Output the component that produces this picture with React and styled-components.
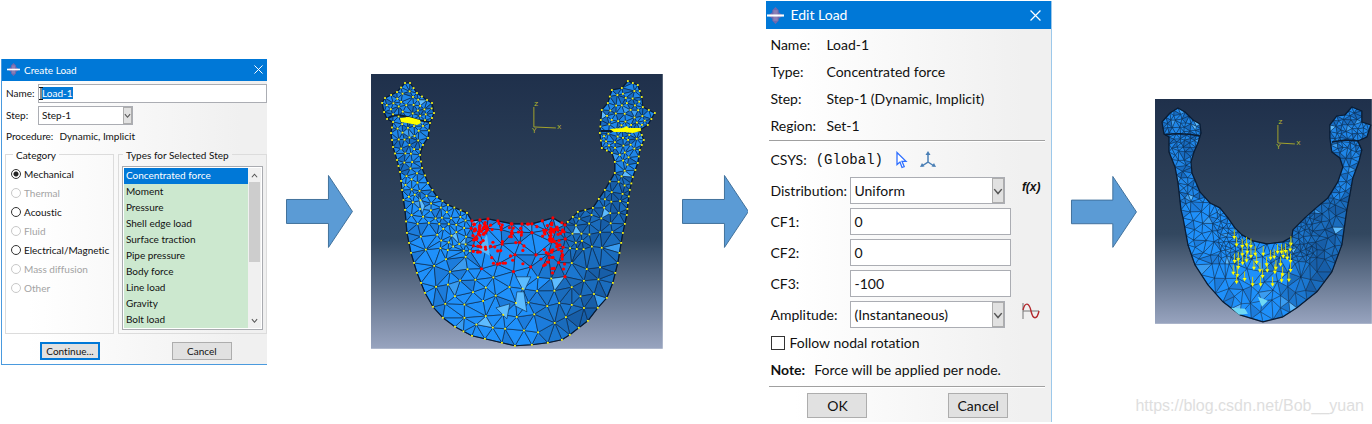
import React, { useEffect, useRef } from "react";
import styled, { createGlobalStyle, css } from "styled-components";

const GlobalStyle = createGlobalStyle`
  *, *::before, *::after { box-sizing: border-box; }
  body {
    margin: 0;
    background: #fff;
    color: #111;
    font-family: Lato, "Open Sans", sans-serif;
    font-variant-ligatures: none;
  }
  button, input, select { font: inherit; font-variant-ligatures: none; color: inherit; margin: 0; }
`;

const Page = styled.main`
  position: relative;
  padding: 1px 0 2px 1px;
`;

const Flow = styled.div`
  display: grid;
  grid-template-columns:
    minmax(0, 266fr) minmax(0, 68fr) minmax(0, 292fr) minmax(0, 68fr)
    minmax(0, 286fr) minmax(0, 67fr) minmax(0, 217fr);
  column-gap: 18px;
  align-items: center;
`;

const Drawing = styled.svg`
  display: block;
  width: 100%;
  height: auto;
`;

const Watermark = styled.a`
  position: absolute;
  right: 8px;
  bottom: 8px;
  font: 16px/20px "Liberation Sans", sans-serif;
  color: #dedede;
  text-decoration: none;
`;

/* ---------- dialog parts ---------- */

const Dialog = styled.section`
  background: linear-gradient(90deg, #fff 10%, #f0f0f0 90%);
  border: 0 solid #4a9ade;
  ${(p) =>
    p.$small
      ? css`
          font-size: 10px;
          line-height: 16px;
          border-width: 0 0 1px 1px;
        `
      : css`
          font-size: 14px;
          line-height: 20px;
          border-right: 1px solid #9cc8ea;
        `}
`;

const TitleBar = styled.header`
  display: flex;
  align-items: center;
  gap: ${(p) => (p.$small ? 4 : 6)}px;
  height: ${(p) => (p.$small ? 22 : 28)}px;
  padding: ${(p) => (p.$small ? "0 4px 0 5px" : "0 10px 0 1px")};
  background: #0078d7;
  color: #fff;
`;

const Title = styled.h2`
  flex: 1;
  margin: 0;
  font: inherit;
`;

const CloseButton = styled.button`
  display: flex;
  padding: 0;
  border: 0;
  background: none;
`;

const PushButton = styled.button`
  width: 60px;
  height: ${(p) => (p.$small ? 18 : 25)}px;
  padding: 0;
  border: ${(p) => (p.$primary ? "2px solid #0078d7" : "1px solid #adadad")};
  background: #e1e1e1;
  line-height: 14px;
`;

const ButtonRow = styled.footer`
  display: flex;
  justify-content: space-between;
  padding: ${(p) => (p.$small ? "8px 35px 4px 38px" : "5px 43px 4px 41px")};
`;

const TextInput = styled.input`
  width: 100%;
  height: ${(p) => (p.$small ? 19 : 27)}px;
  padding: 0 3px;
  border: 1px solid #abadb3;
  border-radius: 0;
  background: #fff;
  outline: none;
  &::selection { background: rgba(0, 120, 215, 0.99); color: #fff; }
`;

const SelectBox = styled.div`
  position: relative;
  width: ${(p) => (p.$small ? "95px" : "auto")};
  margin-right: ${(p) => (p.$small ? 0 : 6)}px;
  select {
    display: block;
    appearance: none;
    width: 100%;
    height: ${(p) => (p.$small ? 19 : 27)}px;
    padding: 0 3px;
    border: 1px solid #abadb3;
    border-radius: 0;
    background: #fff;
  }
`;

const DropMark = styled.span`
  position: absolute;
  top: 1px;
  right: 1px;
  bottom: 1px;
  width: ${(p) => (p.$small ? 9 : 12)}px;
  display: flex;
  align-items: center;
  justify-content: center;
  border: 1px solid #adadad;
  background: #e1e1e1;
  pointer-events: none;
`;

/* ---------- create-load parts ---------- */

const CreateForm = styled.div`
  display: grid;
  grid-template-columns: 32px 1fr;
  align-items: center;
  row-gap: 3px;
  padding: 3px 0 0 4px;
`;

const NameField = styled.div`
  position: relative;
`;

const TextCursor = styled.svg`
  position: absolute;
  left: 1px;
  top: 3px;
  pointer-events: none;
`;

const Procedure = styled.p`
  display: flex;
  gap: 6px;
  margin: 0;
  padding: 3px 4px;
`;

const Groups = styled.div`
  display: grid;
  grid-template-columns: 109fr 149fr;
  gap: 4px;
  padding-left: 3px;
`;

const Group = styled.fieldset`
  min-width: 0;
  margin: 0;
  padding: ${(p) => (p.$list ? "3px" : "2px 4px 0 5px")};
  border: 1px solid #dcdcdc;
  legend { margin-left: ${(p) => (p.$list ? 1 : 2)}px; padding: 0 3px; }
`;

const RadioLabel = styled.label`
  display: flex;
  align-items: center;
  gap: 3px;
  height: 19px;
  white-space: nowrap;
  color: ${(p) => (p.$off ? "#a3a3a3" : "#111")};
  input {
    appearance: none;
    flex: none;
    width: 10px;
    height: 10px;
    border: 1px solid ${(p) => (p.$off ? "#c8c8c8" : "#333")};
    border-radius: 50%;
    background: #fff;
  }
  input:checked { background: radial-gradient(#222 0 2px, #fff 3px); }
`;

const ListFrame = styled.div`
  display: flex;
  height: 164px;
  padding: 1px;
  border: 1px solid #a9abb0;
  background: #fff;
`;

const ListBox = styled.select`
  flex: 1;
  min-width: 0;
  height: 160px;
  padding: 0;
  border: 0;
  border-radius: 0;
  outline: none;
  overflow: hidden;
  background: #cce8cf;
  scrollbar-width: none;
  option { height: 16px; min-height: 16px; padding: 1px 2px 0; line-height: 15px; }
  option:checked {
    background: linear-gradient(#0078d7, #0078d7);
    -webkit-text-fill-color: #fff;
  }
`;

const ScrollTrack = styled.div`
  display: flex;
  flex-direction: column;
  align-items: center;
  justify-content: space-between;
  width: 13px;
  padding: 4px 0;
  background: #f0f0f0;
`;

const ScrollThumb = styled.div`
  width: 11px;
  height: 80px;
  margin: 3px 0 auto;
  background: #cdcdcd;
`;

/* ---------- edit-load parts ---------- */

const InfoList = styled.dl`
  display: grid;
  grid-template-columns: 56px 1fr;
  grid-auto-rows: 27px;
  align-items: center;
  margin: 0;
  padding: 2px 0 1px 4px;
  dd { margin: 0; }
`;

const Separator = styled.hr`
  height: 2px;
  margin: 0 6px 0 3px;
  border: 0;
  border-top: 1px solid #a0a0a0;
  background: #fff;
`;

const CsysRow = styled.div`
  display: flex;
  align-items: center;
  gap: 9px;
  height: 35px;
  padding-left: 4px;
`;

const Mono = styled.span`
  font: 14px/20px "Liberation Mono", monospace;
`;

const IconButton = styled.button`
  display: flex;
  align-items: center;
  justify-content: center;
  height: 20px;
  padding: 0;
  border: 0;
  background: none;
  font: italic bold 12px/20px "Liberation Sans Narrow", "Liberation Sans", sans-serif;
`;

const FieldTool = styled(IconButton)`
  align-self: start;
`;

const LoadForm = styled.div`
  display: grid;
  grid-template-columns: 80px 1fr 40px;
  row-gap: 4px;
  align-items: center;
  padding-left: 4px;
  label { white-space: nowrap; }
`;

const CheckLabel = styled.label`
  display: flex;
  align-items: center;
  gap: 4px;
  height: 30px;
  padding-left: 5px;
  input {
    appearance: none;
    width: 14px;
    height: 14px;
    border: 1px solid #333;
    background: #fff;
  }
`;

const Note = styled.p`
  display: flex;
  gap: 9px;
  align-items: center;
  height: 28px;
  margin: 0;
  padding: 0 0 4px 4px;
`;

/* ---------- small drawings ---------- */

const AppIcon = ({ size }) => (
  <svg width={size} height={size} viewBox="0 0 16 16" aria-hidden="true">
    <path d="M8 0 L11 3 V5 L15 8 L11 11 V13 L8 16 L5 13 V11 L1 8 L5 5 V3 Z" fill="#6f68ae" />
    <path d="M6 3 H10 V13 H6 Z" fill="#8a7fb4" />
    <path d="M0 7 H16 V9 H0 Z" fill="#fff" />
  </svg>
);

const CrossIcon = ({ size }) => (
  <svg width={size} height={size} viewBox="0 0 10 10" aria-hidden="true">
    <path d="M.5 .5 L9.5 9.5 M9.5 .5 L.5 9.5" stroke="#fff" strokeWidth="1.1" />
  </svg>
);

const Chevron = ({ up, size = 7, color = "#555" }) => (
  <svg width={size} height={size} viewBox="0 0 8 8" aria-hidden="true">
    <path d={up ? "M1 6 L4 2.5 L7 6" : "M1 2.5 L4 6 L7 2.5"} fill="none" stroke={color} strokeWidth="1.2" />
  </svg>
);

const BlockArrow = () => (
  <Drawing viewBox="0 0 68 75" aria-hidden="true">
    <path d="M1.5 25.5 H43.5 V1.5 L67.5 37.5 L43.5 73.5 V49.5 H1.5 Z" fill="#5b9bd5" stroke="#41719c" />
  </Drawing>
);

/* ---------- finite element mesh ---------- */

const makeRandom = (seed) => () => {
  seed = (seed * 1664525 + 1013904223) >>> 0;
  return seed / 4294967296;
};

const isInside = (poly, x, y) => {
  let hit = false;
  for (let i = 0, j = poly.length - 1; i < poly.length; j = i++) {
    const [ax, ay] = poly[i];
    const [bx, by] = poly[j];
    if (ay > y !== by > y && x < ((bx - ax) * (y - ay)) / (by - ay) + ax) hit = !hit;
  }
  return hit;
};

const circle = (pts, a, b, c) => {
  const [ax, ay] = pts[a];
  const bx = pts[b][0] - ax;
  const by = pts[b][1] - ay;
  const cx = pts[c][0] - ax;
  const cy = pts[c][1] - ay;
  const d = 2 * (bx * cy - by * cx) || 1e-9;
  const ux = (cy * (bx * bx + by * by) - by * (cx * cx + cy * cy)) / d;
  const uy = (bx * (cx * cx + cy * cy) - cx * (bx * bx + by * by)) / d;
  return { v: [a, b, c], x: ax + ux, y: ay + uy, r: ux * ux + uy * uy };
};

const triangulate = (nodes) => {
  const n = nodes.length;
  const pts = [...nodes, [-2000, -1000], [2500, -1000], [150, 3000]];
  let tris = [circle(pts, n, n + 1, n + 2)];
  for (let i = 0; i < n; i++) {
    const [x, y] = pts[i];
    const edges = new Map();
    tris = tris.filter((t) => {
      if ((t.x - x) ** 2 + (t.y - y) ** 2 >= t.r) return true;
      const [a, b, c] = t.v;
      [[a, b], [b, c], [c, a]].forEach(([p, q]) => {
        const key = p < q ? p * 10000 + q : q * 10000 + p;
        if (edges.has(key)) edges.delete(key);
        else edges.set(key, [p, q]);
      });
      return false;
    });
    edges.forEach(([p, q]) => tris.push(circle(pts, p, q, i)));
  }
  return tris.map((t) => t.v).filter((v) => v.every((k) => k < n));
};

const buildMesh = (outline, spacing, shade, seed) => {
  const rnd = makeRandom(seed);
  const nodes = [];
  outline.forEach(([x, y], i) => {
    const [nx, ny] = outline[(i + 1) % outline.length];
    const len = Math.hypot(nx - x, ny - y);
    const steps = Math.max(1, Math.round(len / Math.min(12, spacing(x, y) + 2)));
    for (let s = 0; s < steps; s++) {
      nodes.push([x + ((nx - x) * s) / steps + rnd() * 0.1, y + ((ny - y) * s) / steps + rnd() * 0.1]);
    }
  });
  const xs = outline.map((p) => p[0]);
  const ys = outline.map((p) => p[1]);
  const x0 = Math.min(...xs);
  const y0 = Math.min(...ys);
  const w = Math.max(...xs) - x0;
  const h = Math.max(...ys) - y0;
  for (let i = 0; i < 16000; i++) {
    const x = x0 + rnd() * w;
    const y = y0 + rnd() * h;
    if (!isInside(outline, x, y)) continue;
    const r = spacing(x, y);
    if (nodes.every((p) => (p[0] - x) ** 2 + (p[1] - y) ** 2 > r * r)) nodes.push([x, y]);
  }
  const faces = triangulate(nodes)
    .map((v) => v.map((k) => nodes[k]))
    .map((t) => ({ t, x: (t[0][0] + t[1][0] + t[2][0]) / 3, y: (t[0][1] + t[1][1] + t[2][1]) / 3 }))
    .filter((f) => isInside(outline, f.x, f.y))
    .map((f) => ({
      d: f.t.map((p) => p[0].toFixed(1) + "," + p[1].toFixed(1)).join(" "),
      fill: shade(f.x, f.y, rnd()),
    }));
  return { nodes, faces };
};

const FULL_JAW = [
  [34, 9], [39, 9], [46, 19], [56, 26], [61, 29], [63, 39], [59, 49], [57, 64], [52, 71], [49, 81],
  [51, 94], [57, 109], [66, 123], [77, 131], [96, 139], [101, 147], [117, 145], [127, 147], [141, 150],
  [161, 150], [182, 144], [194, 151], [197, 148], [207, 138], [222, 134], [234, 116], [244, 99],
  [244, 88], [241, 79], [231, 74], [229, 59], [230, 46], [231, 36], [237, 29], [241, 16], [251, 14],
  [257, 7], [267, 11], [271, 23], [272, 33], [284, 39], [277, 51], [269, 56], [273, 66], [269, 76],
  [267, 89], [262, 103], [259, 116], [257, 129], [256, 141], [252, 159], [247, 189], [242, 209],
  [236, 224], [227, 234], [217, 247], [199, 261], [191, 266], [177, 269], [161, 271], [144, 272],
  [131, 269], [114, 265], [101, 262], [84, 253], [72, 244], [62, 233], [54, 219], [46, 199],
  [40, 179], [36, 159], [34, 136], [31, 116], [29, 98], [26, 86], [22, 73], [20, 59], [22, 48],
  [16, 45], [13, 38], [11, 29], [14, 24], [26, 18],
];

const LOADED_JAW = [
  [23, 9], [30, 13], [38, 21], [45, 25], [46, 34], [43, 44], [39, 53], [36, 63], [37, 74], [45, 93],
  [55, 104], [65, 109], [73, 119], [80, 129], [87, 136], [98, 142], [112, 145], [128, 143], [137, 138],
  [138, 131], [150, 119], [160, 110], [173, 99], [183, 83], [188, 68], [185, 59], [177, 53], [175, 39],
  [175, 26], [182, 17], [190, 16], [197, 8], [207, 12], [207, 23], [216, 26], [212, 38], [203, 42],
  [207, 51], [204, 63], [198, 79], [195, 96], [192, 111], [187, 146], [177, 173], [162, 193],
  [142, 209], [128, 218], [108, 223], [85, 216], [68, 203], [53, 186], [40, 166], [33, 146],
  [28, 119], [26, 111], [23, 84], [20, 68], [14, 53], [14, 38], [9, 35], [7, 23], [15, 14],
];

const jawShade = (middle) => (x, y, r) => {
  if (r > 0.985) return "#5ebcff";
  if (r > 0.95) return "#3a9cf0";
  const depth = (x - middle) / 40 + (r - 0.5) * 0.8;
  if (y < 100) return r < 0.3 ? "#176bc0" : "#1f86e8";
  if (depth > 0.4) return r < 0.4 ? "#175ea8" : "#1a6cbd";
  if (depth > 0) return "#1b77d0";
  return r < 0.2 ? "#1c7cdc" : "#1f90fa";
};

const fullSpacing = (x, y) => {
  if (y < 80) return 5;
  if (y < 130) return 6;
  if (y < 178 && ((x > 68 && x < 104) || (x > 192 && x < 222))) return 6;
  if (y < 160) return 8;
  return 12;
};

const loadedSpacing = (x, y) => {
  if (y < 50) return 4;
  if (y < 105) return 5;
  if (y < 165 && ((x > 62 && x < 92) || (x > 134 && x < 160))) return 4;
  if (y < 160) return 7;
  return 9;
};

const fullMesh = buildMesh(FULL_JAW, fullSpacing, jawShade(175), 11);
const loadedMesh = buildMesh(LOADED_JAW, loadedSpacing, jawShade(128), 29);

const inLoadedRegion = ([x, y]) => x > 100 && x < 196 && y > 142 && y < 203;

const redNodes = (() => {
  const rnd = makeRandom(5);
  const pts = fullMesh.nodes.filter(inLoadedRegion);
  const spread = (n, x, y, w, h) => {
    for (let i = 0; i < n; i++) pts.push([x + rnd() * w, y + rnd() * h]);
  };
  spread(28, 102, 147, 14, 22);
  spread(34, 178, 147, 14, 32);
  spread(28, 112, 149, 70, 14);
  spread(16, 102, 164, 28, 28);
  spread(18, 170, 168, 24, 32);
  spread(14, 126, 160, 50, 34);
  return pts;
})();

const FORCE_TIPS = [
  [253, 98], [260, 120], [277, 125], [290, 120], [303, 125], [316, 148], [292, 142], [340, 148],
  [373, 157], [383, 142], [395, 142], [407, 140], [423, 118], [421, 135], [254, 170], [265, 165],
  [277, 150], [303, 155], [290, 168], [265, 188], [278, 175], [250, 205], [262, 212], [320, 173],
  [312, 190], [260, 232], [284, 224], [308, 240], [332, 240], [338, 215], [330, 198], [352, 198],
  [362, 160], [375, 202], [368, 240], [395, 228], [392, 180], [400, 155], [412, 160], [422, 170],
  [398, 210], [417, 226], [422, 197], [378, 190], [350, 180],
].map(([x, y]) => [x / 3 - 5, y / 3 + 106]);

const Backdrop = ({ id, width, height }) => (
  <>
    <defs>
      <linearGradient id={id} x1="0" y1="0" x2="0" y2="1">
        <stop offset="0" stopColor="#1f304b" />
        <stop offset=".6" stopColor="#32475f" />
        <stop offset="1" stopColor="#98a4bf" />
      </linearGradient>
    </defs>
    <rect width={width} height={height} fill={"url(#" + id + ")"} />
  </>
);

const Mesh = ({ mesh, outline, line }) => (
  <g strokeLinejoin="round">
    {mesh.faces.map((f, i) => (
      <polygon key={i} points={f.d} fill={f.fill} stroke="#0a2543" strokeWidth={line} />
    ))}
    <polygon points={outline.join(" ")} fill="none" stroke="#0a1c33" strokeWidth="1.2" />
  </g>
);

const Triad = ({ x, y, up, right }) => (
  <g fill="#b4b42c" fontFamily="Liberation Mono, monospace" fontSize="8">
    <path
      d={`M${x} ${y - up} V${y} L${x + right} ${y + 1}`}
      fill="none"
      stroke="#a3a32c"
    />
    <text x={x} y={y - up - 1}>z</text>
    <text x={x + right + 1} y={y + 2}>x</text>
    <text x={x - 2} y={y + 6}>Y</text>
  </g>
);

const MandibleNodes = () => (
  <Drawing viewBox="0 0 292 275" role="img" aria-label="Mandible mesh with node set">
    <Backdrop id="sky-nodes" width="292" height="275" />
    <Mesh mesh={fullMesh} outline={FULL_JAW} line=".6" />
    <path d="M108 176 L116 160 L119 182 Z" fill="#59b8fb" />
    <path d="M145 203 H160 L153 218 Z M146 218 L153 218 L156 238 L144 232 Z M125 234 L139 230 L136 245 Z M47 120 L54 132 L51 140 Z" fill="#5cbcff" stroke="#0a2543" strokeWidth=".6" />
    <path d="M16 45 Q24 39 36 43 T59 48" fill="none" stroke="#0a1c33" strokeWidth="2" />
    <path d="M230 57 H270" stroke="#0a1c33" strokeWidth="2" />
    {fullMesh.nodes
      .filter((p) => !inLoadedRegion(p))
      .map(([x, y], i) => (
        <rect key={i} x={x - 0.9} y={y - 0.9} width="1.8" height="1.8" fill="#faf51a" />
      ))}
    <path d="M29 44 L38 43 L49 46 L50 49 L46 51 L36 49 L30 48 Z" fill="#ff0" />
    <path d="M239 55 L252 54 L256 52 L258 54 L270 54 V57 L262 59 L254 58 L243 58 Z" fill="#ff0" />
    {redNodes.map(([x, y], i) => (
      <circle key={i} cx={x} cy={y} r="1.6" fill="#f00" />
    ))}
    <Triad x={163} y={53} up={20} right={22} />
  </Drawing>
);

const MandibleForces = () => (
  <Drawing viewBox="0 0 217 225" role="img" aria-label="Mandible mesh with applied forces">
    <Backdrop id="sky-forces" width="217" height="225" />
    <Mesh mesh={loadedMesh} outline={LOADED_JAW} line=".4" />
    <path d="M10 36 Q26 33 45 37 M177 43 L190 41 L204 42" fill="none" stroke="#0a1c33" strokeWidth="1.6" />
    <path d="M76 209 L90 210 L93 215 L84 216 Z M103 198 L113 202 L107 208 Z" fill="#6fd8f5" />
    {FORCE_TIPS.map(([x, y], i) => (
      <g key={i}>
        <path d={`M${x} ${y - 8} V${y}`} stroke="#c9cc1c" strokeWidth="1" />
        <path d={`M${x - 2} ${y - 1.5} H${x + 2} L${x} ${y + 2} Z`} fill="#ff0" />
      </g>
    ))}
    <Triad x={123} y={44} up={18} right={17} />
  </Drawing>
);

/* ---------- dialogs ---------- */

const CATEGORIES = [
  ["Mechanical", true],
  ["Thermal", false],
  ["Acoustic", true],
  ["Fluid", false],
  ["Electrical/Magnetic", true],
  ["Mass diffusion", false],
  ["Other", false],
];

const LOAD_TYPES = [
  "Concentrated force", "Moment", "Pressure", "Shell edge load", "Surface traction",
  "Pipe pressure", "Body force", "Line load", "Gravity", "Bolt load",
];

const Combo = ({ id, value, small }) => (
  <SelectBox $small={small}>
    <select id={id} defaultValue={value}>
      <option>{value}</option>
    </select>
    <DropMark $small={small}>
      <Chevron size={small ? 7 : 10} />
    </DropMark>
  </SelectBox>
);

const CreateLoad = () => {
  const nameRef = useRef(null);
  useEffect(() => {
    nameRef.current.focus();
    nameRef.current.select();
  }, []);
  return (
    <Dialog $small>
      <TitleBar $small>
        <AppIcon size={13} />
        <Title>Create Load</Title>
        <CloseButton aria-label="Close"><CrossIcon size={9} /></CloseButton>
      </TitleBar>
      <CreateForm>
        <label htmlFor="load-name">Name:</label>
        <NameField>
          <TextInput $small id="load-name" ref={nameRef} defaultValue="Load-1" />
          <TextCursor width="5" height="13" viewBox="0 0 5 13" aria-hidden="true">
            <path d="M0 .5 H4 M0 12.5 H4 M2 0 V13" stroke="#111" fill="none" />
          </TextCursor>
        </NameField>
        <label htmlFor="load-step">Step:</label>
        <Combo small id="load-step" value="Step-1" />
      </CreateForm>
      <Procedure>
        <span>Procedure:</span>
        <span>Dynamic, Implicit</span>
      </Procedure>
      <Groups>
        <Group>
          <legend>Category</legend>
          {CATEGORIES.map(([name, on], i) => (
            <RadioLabel key={name} $off={!on}>
              <input type="radio" name="category" disabled={!on} defaultChecked={i === 0} />
              {name}
            </RadioLabel>
          ))}
        </Group>
        <Group $list>
          <legend>Types for Selected Step</legend>
          <ListFrame>
            <ListBox size={10} defaultValue={LOAD_TYPES[0]} aria-label="Types for Selected Step">
              {LOAD_TYPES.map((t) => (
                <option key={t}>{t}</option>
              ))}
            </ListBox>
            <ScrollTrack>
              <Chevron up />
              <ScrollThumb />
              <Chevron />
            </ScrollTrack>
          </ListFrame>
        </Group>
      </Groups>
      <ButtonRow $small>
        <PushButton $small $primary>Continue...</PushButton>
        <PushButton $small>Cancel</PushButton>
      </ButtonRow>
    </Dialog>
  );
};

const INFO = [
  ["Name:", "Load-1"],
  ["Type:", "Concentrated force"],
  ["Step:", "Step-1 (Dynamic, Implicit)"],
  ["Region:", "Set-1"],
];

const COMPONENTS = [["CF1:", "0"], ["CF2:", "0"], ["CF3:", "-100"]];

const EditLoad = () => (
  <Dialog>
    <TitleBar>
      <AppIcon size={17} />
      <Title>Edit Load</Title>
      <CloseButton aria-label="Close"><CrossIcon size={11} /></CloseButton>
    </TitleBar>
    <InfoList>
      {INFO.map(([term, value]) => (
        <React.Fragment key={term}>
          <dt>{term}</dt>
          <dd>{value}</dd>
        </React.Fragment>
      ))}
    </InfoList>
    <Separator />
    <CsysRow>
      <span>CSYS:</span>
      <Mono>(Global)</Mono>
      <IconButton aria-label="Pick coordinate system">
        <svg width="18" height="18" viewBox="0 0 18 18" aria-hidden="true">
          <path d="M5 1.5 L5 13.5 L8 11 L10 16.5 L12.2 15.6 L10 10.3 H14 Z" fill="#fff" stroke="#2f6fff" strokeWidth="1.3" />
        </svg>
      </IconButton>
      <IconButton aria-label="Create coordinate system">
        <svg width="18" height="18" viewBox="0 0 18 18" aria-hidden="true">
          <path d="M9 2 V11 L3 15 M9 11 L15 15" fill="none" stroke="#4a7fb5" strokeWidth="1.5" />
          <path d="M9 0 L11.5 4 H6.5 Z M1 16 L3 12 L5.5 15.5 Z M17 16 L15 12 L12.5 15.5 Z" fill="#4a7fb5" />
        </svg>
      </IconButton>
    </CsysRow>
    <LoadForm>
      <label htmlFor="distribution">Distribution:</label>
      <Combo id="distribution" value="Uniform" />
      <FieldTool aria-label="Create field">f(x)</FieldTool>
      {COMPONENTS.map(([name, value]) => (
        <React.Fragment key={name}>
          <label htmlFor={name}>{name}</label>
          <TextInput id={name} defaultValue={value} />
          <span />
        </React.Fragment>
      ))}
      <label htmlFor="amplitude">Amplitude:</label>
      <Combo id="amplitude" value="(Instantaneous)" />
      <FieldTool aria-label="Create amplitude">
        <svg width="18" height="18" viewBox="0 0 18 18" aria-hidden="true">
          <path d="M1 1 V17 M1 9 H17" stroke="#777" fill="none" />
          <path d="M1 8 C3 0 7 0 9 9 S15 18 17 9" stroke="#b3282d" strokeWidth="1.4" fill="none" />
        </svg>
      </FieldTool>
    </LoadForm>
    <CheckLabel>
      <input type="checkbox" />
      Follow nodal rotation
    </CheckLabel>
    <Note>
      <strong>Note:</strong>
      <span>Force will be applied per node.</span>
    </Note>
    <Separator />
    <ButtonRow>
      <PushButton>OK</PushButton>
      <PushButton>Cancel</PushButton>
    </ButtonRow>
  </Dialog>
);

export default function App() {
  return (
    <Page>
      <GlobalStyle />
      <Flow>
        <CreateLoad />
        <BlockArrow />
        <MandibleNodes />
        <BlockArrow />
        <EditLoad />
        <BlockArrow />
        <MandibleForces />
      </Flow>
      <Watermark href="#">https://blog.csdn.net/Bob__yuan</Watermark>
    </Page>
  );
}
